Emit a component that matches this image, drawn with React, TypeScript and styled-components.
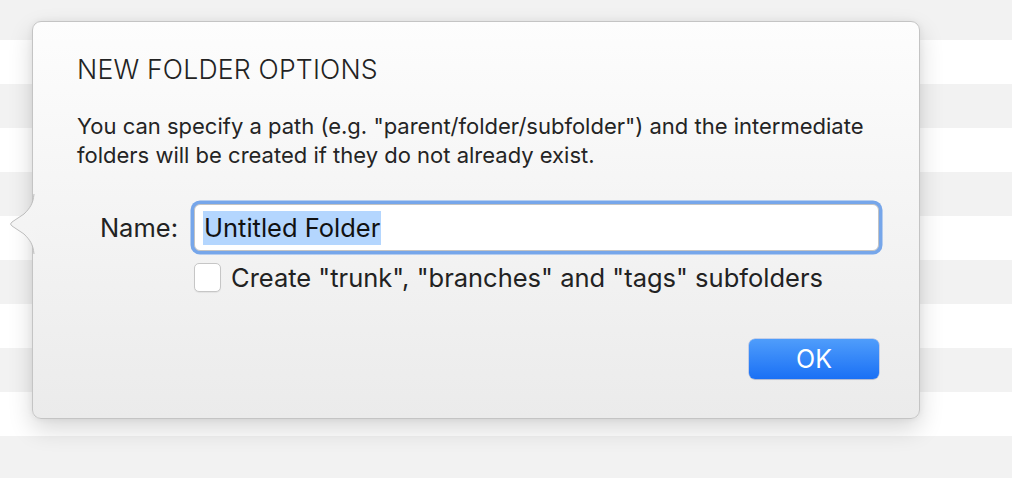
import React from "react";
import styled, { createGlobalStyle } from "styled-components";

const Global = createGlobalStyle`
  html, body { margin: 0; padding: 0; }
  body {
    width: 1012px;
    height: 478px;
    overflow: hidden;
    background: #f2f2f2;
    font-family: Inter, "Open Sans", "Liberation Sans", sans-serif;
    -webkit-font-smoothing: antialiased;
  }
`;

const Stage = styled.div`
  position: relative;
  width: 1012px;
  height: 478px;
  overflow: hidden;
`;

const Stripes = styled.div`
  display: flex;
  flex-direction: column;
  margin-top: -4px;
`;

const Stripe = styled.div<{ $odd: boolean }>`
  height: 44px;
  flex: none;
  background: ${(p) => (p.$odd ? "#ffffff" : "#f2f2f2")};
`;

const Popover = styled.div`
  position: absolute;
  left: 32px;
  top: 21px;
  width: 888px;
  height: 398px;
  box-sizing: border-box;
  border: 1px solid #c4c4c4;
  border-radius: 9px;
  background: linear-gradient(#fdfdfd, #ebebeb);
  box-shadow: 0 10px 24px rgba(0, 0, 0, 0.16), 0 0 6px rgba(0, 0, 0, 0.06);
  padding: 30px 36px 0 44px;
  display: flex;
  flex-direction: column;
`;

const Arrow = styled.svg`
  position: absolute;
  left: -26px;
  top: 172px;
  overflow: visible;
`;

const Title = styled.h1`
  margin: 0;
  font-size: 26.6px;
  font-weight: 300;
  color: #232323;
  line-height: 34px;
  letter-spacing: 0.2px;
`;

const Description = styled.p`
  margin: 26px 0 0;
  font-size: 22px;
  line-height: 29px;
  color: #242424;
`;

const Form = styled.div`
  margin-top: 34px;
  display: grid;
  grid-template-columns: 101px 1fr;
  column-gap: 12px;
  row-gap: 11px;
  align-items: center;
`;

const Label = styled.label`
  justify-self: end;
  font-size: 25.5px;
  color: #222;
`;

const Field = styled.div`
  height: 47px;
  box-sizing: border-box;
  border-radius: 6px;
  background: #fff;
  border: 1px solid #c3c3c3;
  box-shadow: 0 0 0 3.5px #76a6ea;
  display: flex;
  align-items: center;
  padding-left: 8px;
  margin: 0 4px;
`;

const Selected = styled.span`
  background: #b4d6fe;
  font-size: 25.5px;
  color: #111;
  line-height: 34px;
  padding: 0 1px;
`;

const CheckRow = styled.label`
  grid-column: 2;
  display: flex;
  align-items: center;
  gap: 10px;
  padding-left: 4px;
  font-size: 25.5px;
  color: #222;
`;

const Box = styled.span`
  width: 27px;
  height: 29px;
  box-sizing: border-box;
  border-radius: 5px;
  border: 1px solid #c6c6c6;
  background: #fff;
  box-shadow: 0 1px 1px rgba(0, 0, 0, 0.06);
`;

const Actions = styled.div`
  margin-top: 46px;
  padding-right: 4px;
  display: flex;
  justify-content: flex-end;
`;

const OkButton = styled.button`
  width: 130px;
  height: 40px;
  border: none;
  border-radius: 6px;
  background: linear-gradient(#4f9dfb, #1a70f5);
  box-shadow: 0 0 0 0.5px rgba(0, 60, 200, 0.35), 0 1px 1px rgba(0, 0, 0, 0.1);
  color: #fff;
  font-family: inherit;
  font-size: 25px;
  font-weight: 400;
  padding: 0;
`;

export default function App() {
  return (
    <Stage>
      <Global />
      <Stripes>
        {Array.from({ length: 12 }, (_, i) => (
          <Stripe key={i} $odd={i % 2 === 1} />
        ))}
      </Stripes>
      <Popover>
        <Arrow width="28" height="60" viewBox="0 0 28 60">
          <defs>
            <linearGradient id="ag" x1="0" y1="0" x2="0" y2="1">
              <stop offset="0" stopColor="#f5f5f5" />
              <stop offset="1" stopColor="#f3f3f3" />
            </linearGradient>
          </defs>
          <path
            d="M27 0 C26 10 23 14 17 20 L5 28 Q2 30 5 32 L17 40 C23 46 26 50 27 60 L28 60 L28 0 Z"
            fill="url(#ag)"
          />
          <path
            d="M27 0 C26 10 23 14 17 20 L5 28 Q2 30 5 32 L17 40 C23 46 26 50 27 60"
            fill="none"
            stroke="#bdbdbd"
            strokeWidth="1"
          />
        </Arrow>
        <Title>NEW FOLDER OPTIONS</Title>
        <Description>
          You can specify a path (e.g. "parent/folder/subfolder") and the intermediate
          <br />
          folders will be created if they do not already exist.
        </Description>
        <Form>
          <Label>Name:</Label>
          <Field>
            <Selected>Untitled Folder</Selected>
          </Field>
          <CheckRow>
            <Box />
            Create "trunk", "branches" and "tags" subfolders
          </CheckRow>
        </Form>
        <Actions>
          <OkButton>OK</OkButton>
        </Actions>
      </Popover>
    </Stage>
  );
}
